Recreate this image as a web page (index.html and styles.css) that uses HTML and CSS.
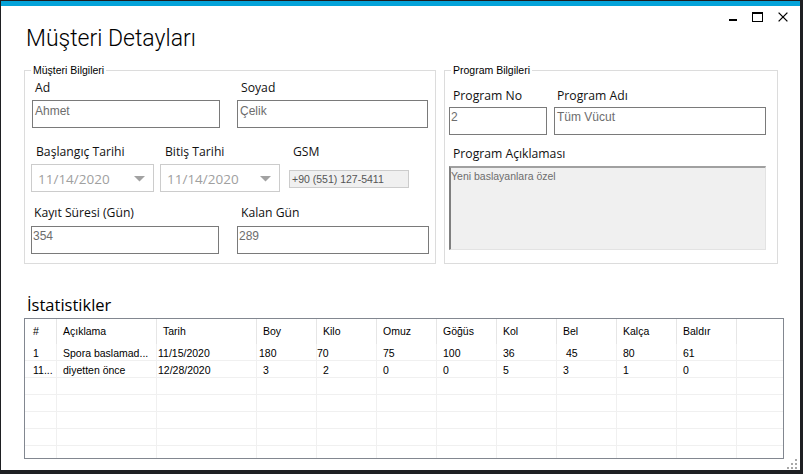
FILE: index.html
```html
<!DOCTYPE html>
<html lang="tr">
<head>
<meta charset="utf-8">
<title>Müşteri Detayları</title>
<link rel="stylesheet" href="styles.css">
</head>
<body>
<div class="window">
  <div class="caption">
    <svg class="cb cb-min" width="10" height="10" viewBox="0 0 10 10"><rect x="1" y="7" width="8" height="2" fill="#000"/></svg>
    <svg class="cb cb-max" width="11" height="10" viewBox="0 0 11 10"><rect x="0.5" y="0.5" width="10" height="9" fill="none" stroke="#000"/><rect x="0" y="0" width="11" height="2" fill="#000"/></svg>
    <svg class="cb cb-close" width="10" height="10" viewBox="0 0 10 10"><path d="M0.6 0.6 L9.4 9.4 M9.4 0.6 L0.6 9.4" stroke="#000" stroke-width="1.3" fill="none"/></svg>
  </div>

  <h1 class="title">Müşteri Detayları</h1>

  <div class="groups">
    <fieldset class="group g1">
      <legend>Müşteri Bilgileri</legend>
      <div class="row r1">
        <div class="field f-ad"><span class="lbl l3">Ad</span><div class="tb">Ahmet</div></div>
        <div class="field f-soyad"><span class="lbl l4">Soyad</span><div class="tb">Çelik</div></div>
      </div>
      <div class="row r2">
        <div class="field f-d1"><span class="lbl l5">Başlangıç Tarihi</span><div class="dt"><span class="dt-text">11/14/2020</span><svg class="arrow" width="11" height="6" viewBox="0 0 11 6"><polygon points="0,0 11,0 5.5,5.5" fill="#a2a2a2"/></svg></div></div>
        <div class="field f-d2"><span class="lbl l5">Bitiş Tarihi</span><div class="dt"><span class="dt-text">11/14/2020</span><svg class="arrow" width="11" height="6" viewBox="0 0 11 6"><polygon points="0,0 11,0 5.5,5.5" fill="#a2a2a2"/></svg></div></div>
        <div class="field f-gsm"><span class="lbl l4">GSM</span><div class="gsm">+90 (551) 127-5411</div></div>
      </div>
      <div class="row r3">
        <div class="field f-kayit"><span class="lbl l3">Kayıt Süresi (Gün)</span><div class="tb tb-r3">354</div></div>
        <div class="field f-kalan"><span class="lbl l4">Kalan Gün</span><div class="tb tb-r3">289</div></div>
      </div>
    </fieldset>

    <fieldset class="group g2">
      <legend>Program Bilgileri</legend>
      <div class="row prow1">
        <div class="field f-pno"><span class="lbl l4">Program No</span><div class="tb tb-p">2</div></div>
        <div class="field f-padi"><span class="lbl l3">Program Adı</span><div class="tb tb-p tb-padi">Tüm Vücut</div></div>
      </div>
      <div class="row prow2">
        <div class="field f-pacik"><span class="lbl l4">Program Açıklaması</span><div class="ta">Yeni baslayanlara özel</div></div>
      </div>
    </fieldset>
  </div>

  <h2 class="section">İstatistikler</h2>

  <div class="dg">
    <div class="dg-head">
      <div class="h w1 pl8">#</div>
      <div class="h w2">Açıklama</div>
      <div class="h w2">Tarih</div>
      <div class="h wn">Boy</div>
      <div class="h wn">Kilo</div>
      <div class="h wn">Omuz</div>
      <div class="h wn">Göğüs</div>
      <div class="h wn">Kol</div>
      <div class="h wn">Bel</div>
      <div class="h wn">Kalça</div>
      <div class="h wn">Baldır</div>
      <div class="h wf"></div>
    </div>
    <div class="dg-row">
      <div class="c w1 pl8">1</div>
      <div class="c w2">Spora baslamad...</div>
      <div class="c w2 pl1">11/15/2020</div>
      <div class="c wn pl2">180</div>
      <div class="c wn pl0">70</div>
      <div class="c wn">75</div>
      <div class="c wn">100</div>
      <div class="c wn">36</div>
      <div class="c wn pl9">45</div>
      <div class="c wn">80</div>
      <div class="c wn">61</div>
      <div class="c wf"></div>
    </div>
    <div class="dg-row">
      <div class="c w1 pl8">11...</div>
      <div class="c w2">diyetten önce</div>
      <div class="c w2 pl1">12/28/2020</div>
      <div class="c wn">3</div>
      <div class="c wn">2</div>
      <div class="c wn">0</div>
      <div class="c wn">0</div>
      <div class="c wn">5</div>
      <div class="c wn">3</div>
      <div class="c wn">1</div>
      <div class="c wn">0</div>
      <div class="c wf"></div>
    </div>
    <div class="dg-row"><div class="c w1"></div><div class="c w2"></div><div class="c w2"></div><div class="c wn"></div><div class="c wn"></div><div class="c wn"></div><div class="c wn"></div><div class="c wn"></div><div class="c wn"></div><div class="c wn"></div><div class="c wn"></div><div class="c wf"></div></div>
    <div class="dg-row"><div class="c w1"></div><div class="c w2"></div><div class="c w2"></div><div class="c wn"></div><div class="c wn"></div><div class="c wn"></div><div class="c wn"></div><div class="c wn"></div><div class="c wn"></div><div class="c wn"></div><div class="c wn"></div><div class="c wf"></div></div>
    <div class="dg-row"><div class="c w1"></div><div class="c w2"></div><div class="c w2"></div><div class="c wn"></div><div class="c wn"></div><div class="c wn"></div><div class="c wn"></div><div class="c wn"></div><div class="c wn"></div><div class="c wn"></div><div class="c wn"></div><div class="c wf"></div></div>
    <div class="dg-row"><div class="c w1"></div><div class="c w2"></div><div class="c w2"></div><div class="c wn"></div><div class="c wn"></div><div class="c wn"></div><div class="c wn"></div><div class="c wn"></div><div class="c wn"></div><div class="c wn"></div><div class="c wn"></div><div class="c wf"></div></div>
    <div class="dg-row"><div class="c w1"></div><div class="c w2"></div><div class="c w2"></div><div class="c wn"></div><div class="c wn"></div><div class="c wn"></div><div class="c wn"></div><div class="c wn"></div><div class="c wn"></div><div class="c wn"></div><div class="c wn"></div><div class="c wf"></div></div>
  </div>

  <svg class="grip" width="12" height="11" viewBox="0 0 12 11">
    <rect x="9" y="1" width="2" height="2" fill="#a8a8a8"/>
    <rect x="5" y="5" width="2" height="2" fill="#a8a8a8"/>
    <rect x="9" y="5" width="2" height="2" fill="#a8a8a8"/>
    <rect x="1" y="9" width="2" height="2" fill="#a8a8a8"/>
    <rect x="5" y="9" width="2" height="2" fill="#a8a8a8"/>
    <rect x="9" y="9" width="2" height="2" fill="#a8a8a8"/>
  </svg>
</div>
</body>
</html>
```

FILE: styles.css
```css
html, body {
  margin: 0;
  padding: 0;
}
body {
  width: 803px;
  height: 474px;
  overflow: hidden;
  background: #1e1f22;
}
.window {
  box-sizing: border-box;
  position: relative;
  margin: 1px 0 0 1px;
  width: 799px;
  height: 469px;
  background: #ffffff;
  border-top: 5px solid #05a3d9;
  overflow: hidden;
  font-family: "Open Sans", Roboto, sans-serif;
  color: #000;
}

/* caption buttons */
.caption {
  display: flex;
  justify-content: flex-end;
  height: 19px;
  padding-right: 12px;
}
.cb {
  display: block;
  margin-top: 6px;
}
.cb-min { margin-right: 14px; }
.cb-max { margin-right: 15px; }

.title {
  margin: 0 0 0 25px;
  height: 28px;
  font: 300 23px/28px Roboto, sans-serif;
  color: #000;
  white-space: nowrap;
}

/* group boxes */
.groups {
  display: flex;
  gap: 8px;
  margin: 10px 0 0 23px;
}
.group {
  box-sizing: border-box;
  margin: 0;
  padding: 0;
  min-width: 0;
  height: 201px;
  border: 1px solid #dcdcdc;
}
.g1 { width: 412px; }
.g2 { width: 334px; }
.group legend {
  margin-left: 6px;
  padding: 0 2px;
  font: 10.5px/14px "Liberation Sans", Arial, sans-serif;
  color: #000;
}

.row {
  display: flex;
  align-items: flex-start;
}
.field {
  display: flex;
  flex-direction: column;
  flex: none;
}
.lbl {
  display: block;
  font: 400 12.2px/18px "Open Sans", sans-serif;
  color: #111;
  white-space: nowrap;
}
.l3 { padding-left: 3px; }
.l4 { padding-left: 4px; }
.l5 { padding-left: 5px; }

.tb {
  box-sizing: border-box;
  height: 28px;
  margin-top: 3px;
  padding: 3px 0 0 2px;
  border: 1px solid #7a7a7a;
  font: 12px/14px "Liberation Sans", Arial, sans-serif;
  color: #6d6d6d;
  white-space: nowrap;
}
.tb-r3 {
  margin-top: 4px;
  padding: 2px 0 0 1px;
}
.tb-p {
  margin-top: 2px;
  padding: 2px 0 0 1px;
}
.tb-padi { padding-left: 2px; }

.r1 { margin-top: 2px; padding-left: 7px; }
.f-ad { width: 188px; }
.f-soyad { width: 191px; margin-left: 17px; }

.r2 { margin-top: 15px; padding-left: 6px; }
.f-d1 { width: 123px; }
.f-d2 { width: 120px; margin-left: 6px; }
.f-gsm { width: 120px; margin-left: 9px; }

.dt {
  box-sizing: border-box;
  display: flex;
  align-items: center;
  justify-content: space-between;
  height: 28px;
  margin-top: 3px;
  padding: 1px 8px 0 6px;
  border: 1px solid #cccccc;
  font: 13.5px/16px "Open Sans", sans-serif;
  color: #a0a0a0;
}
.arrow { display: block; }

.gsm {
  box-sizing: border-box;
  height: 18px;
  margin-top: 9px;
  padding-left: 2px;
  border: 1px solid #cccccc;
  background: #f0f0f0;
  font: 10.5px/16px "Liberation Sans", Arial, sans-serif;
  color: #555;
  white-space: nowrap;
}

.r3 { margin-top: 12px; padding-left: 6px; }
.f-kayit { width: 188px; }
.f-kalan { width: 192px; margin-left: 18px; }

.prow1 { margin-top: 10px; padding-left: 4px; }
.f-pno { width: 98px; }
.f-padi { width: 212px; margin-left: 7px; }
.prow2 { margin-top: 10px; padding-left: 4px; }
.f-pacik { width: 317px; }

.ta {
  box-sizing: border-box;
  height: 84px;
  margin-top: 3px;
  padding: 2px 0 0 0;
  background: #f0f0f0;
  border-top: 2px solid #a0a0a0;
  border-left: 2px solid #7f7f7f;
  border-right: 1px solid #e3e3e3;
  border-bottom: 1px solid #e3e3e3;
  font: 10.5px/13px "Liberation Sans", Arial, sans-serif;
  color: #6d6d6d;
}

.section {
  margin: 31px 0 0 26px;
  height: 20px;
  font: 400 16.5px/20px "Open Sans", sans-serif;
  color: #000;
}

/* data grid */
.dg {
  box-sizing: border-box;
  margin: 3px 0 0 23px;
  width: 760px;
  height: 141px;
  border: 1px solid #828790;
  overflow: hidden;
  background: #fff;
  font-family: "Liberation Sans", Arial, sans-serif;
  font-size: 10.5px;
  color: #000;
}
.dg-head, .dg-row {
  display: flex;
}
.h {
  box-sizing: border-box;
  flex: none;
  height: 25px;
  padding-left: 6px;
  line-height: 25px;
  border-right: 1px solid #e6e6e6;
  white-space: nowrap;
}
.c {
  box-sizing: border-box;
  flex: none;
  height: 17px;
  padding: 3px 0 0 6px;
  line-height: 13px;
  border-right: 1px solid #f0f0f0;
  border-bottom: 1px solid #f0f0f0;
  white-space: nowrap;
  overflow: hidden;
}
.w1 { width: 32px; }
.w2 { width: 100px; }
.wn { width: 60px; }
.wf { flex: 1 1 auto; border-right: 0; }
.pl8 { padding-left: 8px; }
.pl9 { padding-left: 9px; }
.pl2 { padding-left: 2px; }
.pl1 { padding-left: 1px; }
.pl0 { padding-left: 0; }

.grip {
  position: absolute;
  right: 2px;
  bottom: 1px;
}
```
